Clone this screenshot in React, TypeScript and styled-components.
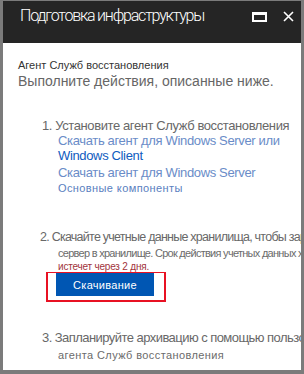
import * as React from 'react';
import styled, { createGlobalStyle } from 'styled-components';

const GlobalStyle = createGlobalStyle`
  html, body {
    margin: 0;
    padding: 0;
    background: #7b7b7b;
  }
`;

const Frame = styled.div`
  width: 304px;
  height: 374px;
  box-sizing: border-box;
  padding: 1px 3px 4px 3px;
  background: #7b7b7b;
`;

const Panel = styled.div`
  height: 100%;
  background: #ffffff;
  display: flex;
  flex-direction: column;
  overflow: hidden;
`;

const Header = styled.div`
  height: 42px;
  flex: none;
  background: #252525;
  display: flex;
  align-items: flex-start;
  padding: 5px 0 0 17px;
  box-sizing: border-box;
`;

const Title = styled.h1`
  margin: 0;
  flex: 1;
  font-family: Roboto, 'Liberation Sans', sans-serif;
  font-weight: 300;
  font-size: 16px;
  letter-spacing: -1.2px;
  line-height: 20px;
  color: #ffffff;
  white-space: nowrap;
`;

const HeaderIcons = styled.div`
  display: flex;
  align-items: center;
  gap: 16px;
  padding: 5px 7px 0 0;
`;

const Body = styled.div`
  padding: 15px 0 0 15px;
  font-family: 'Liberation Sans', Arial, sans-serif;
  white-space: nowrap;
`;

const Caption = styled.div`
  font-size: 11px;
  line-height: 14px;
  color: #333333;
`;

const Lead = styled.div`
  font-size: 14px;
  line-height: 18px;
  color: #666666;
`;

const Step = styled.div<{ $top: number }>`
  margin-top: ${({ $top }) => $top}px;
  padding-left: 24px;
`;

const StepTitle = styled.div<{ $shift?: number; $size?: number; $track?: number }>`
  font-size: ${({ $size }) => $size ?? 13}px;
  line-height: 14px;
  letter-spacing: ${({ $track }) => $track ?? -0.4}px;
  color: #686868;
  margin-left: ${({ $shift }) => $shift ?? 0}px;
`;

const Indent = styled.div`
  padding-left: 16px;
`;

const Link = styled.a<{ $strong?: boolean; $gap?: number }>`
  display: block;
  font-size: 13px;
  line-height: 15px;
  letter-spacing: -0.35px;
  margin-top: ${({ $gap }) => $gap ?? 0}px;
  color: ${({ $strong }) => ($strong ? '#0f5cc0' : '#6a8cc8')};
  text-decoration: none;
`;

const Note = styled.div<{
  $tone?: 'blue' | 'grey' | 'red';
  $gap?: number;
  $size?: number;
  $track?: number;
}>`
  font-size: ${({ $size }) => $size ?? 11}px;
  line-height: 14px;
  letter-spacing: ${({ $track }) => $track ?? 0.4}px;
  margin-top: ${({ $gap }) => $gap ?? 0}px;
  color: ${({ $tone }) =>
    $tone === 'blue' ? '#5a80c0' : $tone === 'red' ? '#a2353c' : '#6b6b6b'};
`;

const Highlight = styled.div`
  width: 120px;
  height: 30px;
  box-sizing: border-box;
  border: 2px solid #e81123;
  border-top-width: 1px;
  margin: -2px 0 0 -12px;
  padding: 0 10px 0 8px;
`;

const DownloadButton = styled.button`
  display: block;
  width: 100%;
  height: 23px;
  border: none;
  background: #0056b3;
  color: #ffffff;
  font-family: 'Liberation Sans', Arial, sans-serif;
  font-size: 11px;
  letter-spacing: 0.3px;
  padding: 0;
`;

const MaximizeIcon = () => (
  <svg width="15" height="10" viewBox="0 0 15 10">
    <rect x="1" y="1.5" width="13" height="7.5" fill="none" stroke="#fff" strokeWidth="2" />
    <rect x="0" y="0" width="15" height="3" fill="#fff" />
  </svg>
);

const CloseIcon = () => (
  <svg width="11" height="11" viewBox="0 0 11 11">
    <path d="M1 1 L10 10 M10 1 L1 10" stroke="#fff" strokeWidth="1.6" />
  </svg>
);

const App: React.FC = () => {
  return (
    <Frame>
      <GlobalStyle />
      <Panel>
        <Header>
          <Title>Подготовка инфраструктуры</Title>
          <HeaderIcons>
            <MaximizeIcon />
            <CloseIcon />
          </HeaderIcons>
        </Header>
        <Body>
          <Caption>Агент Служб восстановления</Caption>
          <Lead>Выполните действия, описанные ниже.</Lead>

          <Step $top={29}>
            <StepTitle>1. Установите агент Служб восстановления</StepTitle>
            <Indent>
              <Link href="#">Скачать агент для Windows Server или</Link>
              <Link href="#" $strong>
                Windows Client
              </Link>
              <Link href="#" $gap={2}>
                Скачать агент для Windows Server
              </Link>
              <Note $tone="blue" $gap={1}>
                Основные компоненты
              </Note>
            </Indent>
          </Step>

          <Step $top={35}>
            <StepTitle $shift={-2} $size={12.5} $track={-0.75}>
              2. Скачайте учетные данные хранилища, чтобы зарегистрировать
            </StepTitle>
            <Indent>
              <Note $gap={2} $track={-0.72}>
                сервер в хранилище. Срок действия учетных данных хранилища
              </Note>
              <Note $tone="red" $size={10} $track={-0.2}>
                истечет через 2 дня.
              </Note>
              <Highlight>
                <DownloadButton>Скачивание</DownloadButton>
              </Highlight>
            </Indent>
          </Step>

          <Step $top={29}>
            <StepTitle $track={-0.55}>
              3. Запланируйте архивацию с помощью пользовательского интерфейса
            </StepTitle>
            <Indent>
              <Note $gap={3}>агента Служб восстановления</Note>
            </Indent>
          </Step>
        </Body>
      </Panel>
    </Frame>
  );
};

export default App;
